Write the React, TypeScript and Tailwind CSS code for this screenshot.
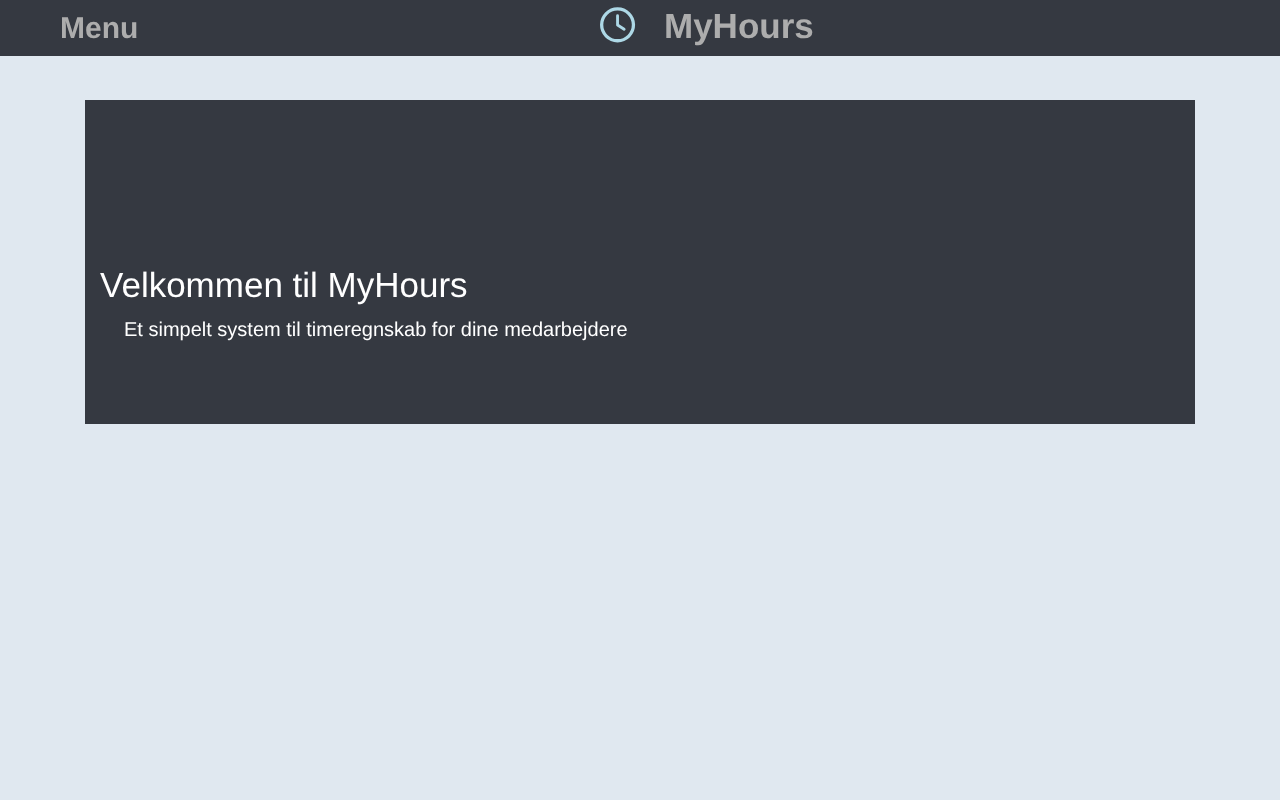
import React from "react";

export default function App() {
  return (
    <div className="min-h-[800px] bg-[#e0e8f0] font-['Liberation_Sans',sans-serif] [text-rendering:geometricPrecision]">
      <header className="h-14 bg-[#353941] flex items-start text-[#adadad] font-bold">
        <div className="w-[600px] pl-[60px] pt-[11px] text-3xl leading-[36px] will-change-transform">Menu</div>
        <div className="flex items-start">
          <svg className="mt-[7px] w-9 h-9" viewBox="0 0 24 24" fill="none" stroke="#add8e6" strokeLinecap="round" strokeLinejoin="round">
            <circle cx="11.7" cy="11.9" r="10.6" strokeWidth="2.2" />
            <path d="M11.7 5.8v6.2l4.4 2.8" strokeWidth="1.9" />
          </svg>
          <div className="ml-7 pt-[7px] text-[35px] leading-[40px] will-change-transform">MyHours</div>
        </div>
      </header>
      <main className="pt-11 px-[85px]">
        <section className="h-[324px] bg-[#353941] text-white pl-[15px] pt-[166px]">
          <h1 className="text-[35px] leading-[40px] will-change-transform">Velkommen til MyHours</h1>
          <p className="pl-6 pt-[12px] text-xl leading-[24px] will-change-transform">Et simpelt system til timeregnskab for dine medarbejdere</p>
        </section>
      </main>
    </div>
  );
}
